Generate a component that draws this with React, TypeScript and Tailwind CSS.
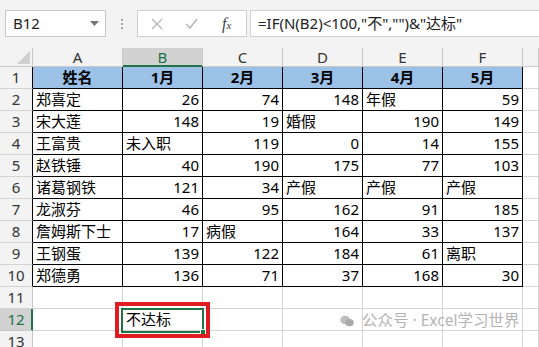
import React from "react";

// Excel sheet: formula bar + table A1:F10 with an annotated B12.

const COLS = ["A", "B", "C", "D", "E", "F", "G"];
const HEAD = ["姓名", "1月", "2月", "3月", "4月", "5月"];
const ROWS: (string | number)[][] = [
  ["郑喜定", 26, 74, 148, "年假", 59],
  ["宋大莲", 148, 19, "婚假", 190, 149],
  ["王富贵", "未入职", 119, 0, 14, 155],
  ["赵铁锤", 40, 190, 175, 77, 103],
  ["诸葛钢铁", 121, 34, "产假", "产假", "产假"],
  ["龙淑芬", 46, 95, 162, 91, 185],
  ["詹姆斯下士", 17, "病假", 164, 33, 137],
  ["王钢蛋", 139, 122, 184, 61, "离职"],
  ["郑德勇", 136, 71, 37, 168, 30],
];

function Cell({ v, boxed, bold, fill }: { v?: string | number; boxed?: boolean; bold?: boolean; fill?: boolean }) {
  const num = typeof v === "number";
  return (
    <div
      className={`flex h-[22px] items-center overflow-visible whitespace-nowrap border-b border-r px-[3px] text-[15px] leading-none text-black ${
        boxed ? "border-black" : "border-[#d4d4d4]"
      } ${bold ? "justify-center font-bold" : num ? "justify-end" : "justify-start"} ${fill ? "bg-[#9bc2e6]" : "bg-white"}`}
    >
      {v}
    </div>
  );
}

function RowHead({ n, boxed, active }: { n: number; boxed?: boolean; active?: boolean }) {
  return (
    <div
      className={`flex h-[22px] items-center justify-center border-b border-r text-[15px] leading-none ${
        active
          ? "border-b-[#c8c8c8] border-r-[#217346] bg-[#d2d2d2] text-[#217346] shadow-[inset_-1px_0_0_#217346]"
          : `border-b-[#d4d4d4] bg-[#f3f3f3] text-[#333] ${boxed ? "border-r-black" : "border-r-[#c8c8c8]"}`
      }`}
    >
      {n}
    </div>
  );
}

export default function App() {
  return (
    <div className="relative h-[347px] w-[539px] overflow-hidden bg-white font-['Noto_Sans','Noto_Sans_CJK_SC',sans-serif]">
      {/* formula bar */}
      <div className="flex h-[48px] items-start gap-0 bg-[#f3f3f3] pl-[5px] pt-[10px]">
        <div className="flex h-[27px] w-[101px] items-center justify-between border border-[#c6c6c6] bg-white pl-[7px] pr-[6px] text-[15px] text-[#222]">
          <span>B12</span>
          <svg width="9" height="5" viewBox="0 0 9 5"><path d="M0 0h9L4.5 5z" fill="#777" /></svg>
        </div>
        <div className="flex h-[27px] w-[31px] flex-col items-center justify-center gap-[2px]">
          <span className="h-[2px] w-[2px] bg-[#aaa]" />
          <span className="h-[2px] w-[2px] bg-[#aaa]" />
          <span className="h-[2px] w-[2px] bg-[#aaa]" />
        </div>
        <div className="flex h-[27px] w-[110px] items-center border border-[#d0d0d0] bg-white">
          <svg className="ml-[13px]" width="12" height="12" viewBox="0 0 12 12">
            <path d="M1 1l10 10M11 1L1 11" stroke="#b5b5b5" strokeWidth="1.3" fill="none" />
          </svg>
          <svg className="ml-[22px]" width="13" height="11" viewBox="0 0 13 11">
            <path d="M1 6l4 4 7-9" stroke="#b5b5b5" strokeWidth="1.5" fill="none" />
          </svg>
          <span className="ml-[24px] font-['Liberation_Serif',serif] text-[16px] italic text-[#444]">
            f<span className="text-[11px]">x</span>
          </span>
        </div>
        <div className="ml-[3px] flex h-[27px] flex-1 items-center border border-r-0 border-[#d0d0d0] bg-white pl-[7px] text-[15px] text-[#222]">
          =IF(N(B2)&lt;100,"不","")&amp;"达标"
        </div>
      </div>

      {/* grid */}
      <div className="grid grid-cols-[33px_90px_80px_80px_80px_80px_80px_1fr]">
        <div className="flex h-[19px] items-end justify-end border-b border-r border-[#c8c8c8] bg-[#f3f3f3] pb-[2px] pr-[2px]">
          <svg width="13" height="13" viewBox="0 0 13 13"><path d="M13 0v13H0z" fill="#d0d0d0" /></svg>
        </div>
        {COLS.map((c) => (
          <div
            key={c}
            className={`flex h-[19px] items-center justify-center border-b border-r text-[15px] leading-none ${
              c === "B"
                ? "border-b-[#217346] border-r-[#c8c8c8] bg-[#d2d2d2] text-[#217346] shadow-[inset_0_-1px_0_#217346]"
                : "border-[#c8c8c8] bg-[#f3f3f3] text-[#333]"
            }`}
          >
            {c === "G" ? "" : c}
          </div>
        ))}

        <RowHead n={1} boxed />
        {HEAD.map((h) => (
          <Cell key={h} v={h} boxed bold fill />
        ))}
        <Cell />

        {ROWS.map((r, i) => (
          <React.Fragment key={i}>
            <RowHead n={i + 2} boxed />
            {r.map((v, j) => (
              <Cell key={j} v={v} boxed />
            ))}
            <Cell />
          </React.Fragment>
        ))}

        {[11, 12, 13].map((n) => (
          <React.Fragment key={n}>
            <RowHead n={n} active={n === 12} />
            {COLS.map((c) => (
              <Cell key={c} v={n === 12 && c === "B" ? "不达标" : undefined} />
            ))}
          </React.Fragment>
        ))}
      </div>

      {/* active cell B12 */}
      <div className="absolute left-[121px] top-[308px] h-[25px] w-[83px] border-2 border-[#217346]">
        <span className="absolute -bottom-[4px] -right-[4px] h-[6px] w-[6px] border border-white bg-[#217346]" />
      </div>

      {/* red annotation */}
      <div className="absolute left-[115px] top-[302px] h-[36px] w-[95px] border-[4px] border-[#e01b22]" />

      {/* watermark */}
      <div className="absolute left-[340px] top-[313px] flex items-center gap-[8px] text-[15.5px] leading-none text-[#b4b4b4]">
        <svg width="14" height="12" viewBox="0 0 14 12">
          <ellipse cx="5.2" cy="5" rx="5" ry="4.3" fill="#bdbdbd" />
          <ellipse cx="9.5" cy="7.6" rx="4.3" ry="3.6" fill="#a9a9a9" />
        </svg>
        <span>公众号 · Excel学习世界</span>
      </div>
    </div>
  );
}
